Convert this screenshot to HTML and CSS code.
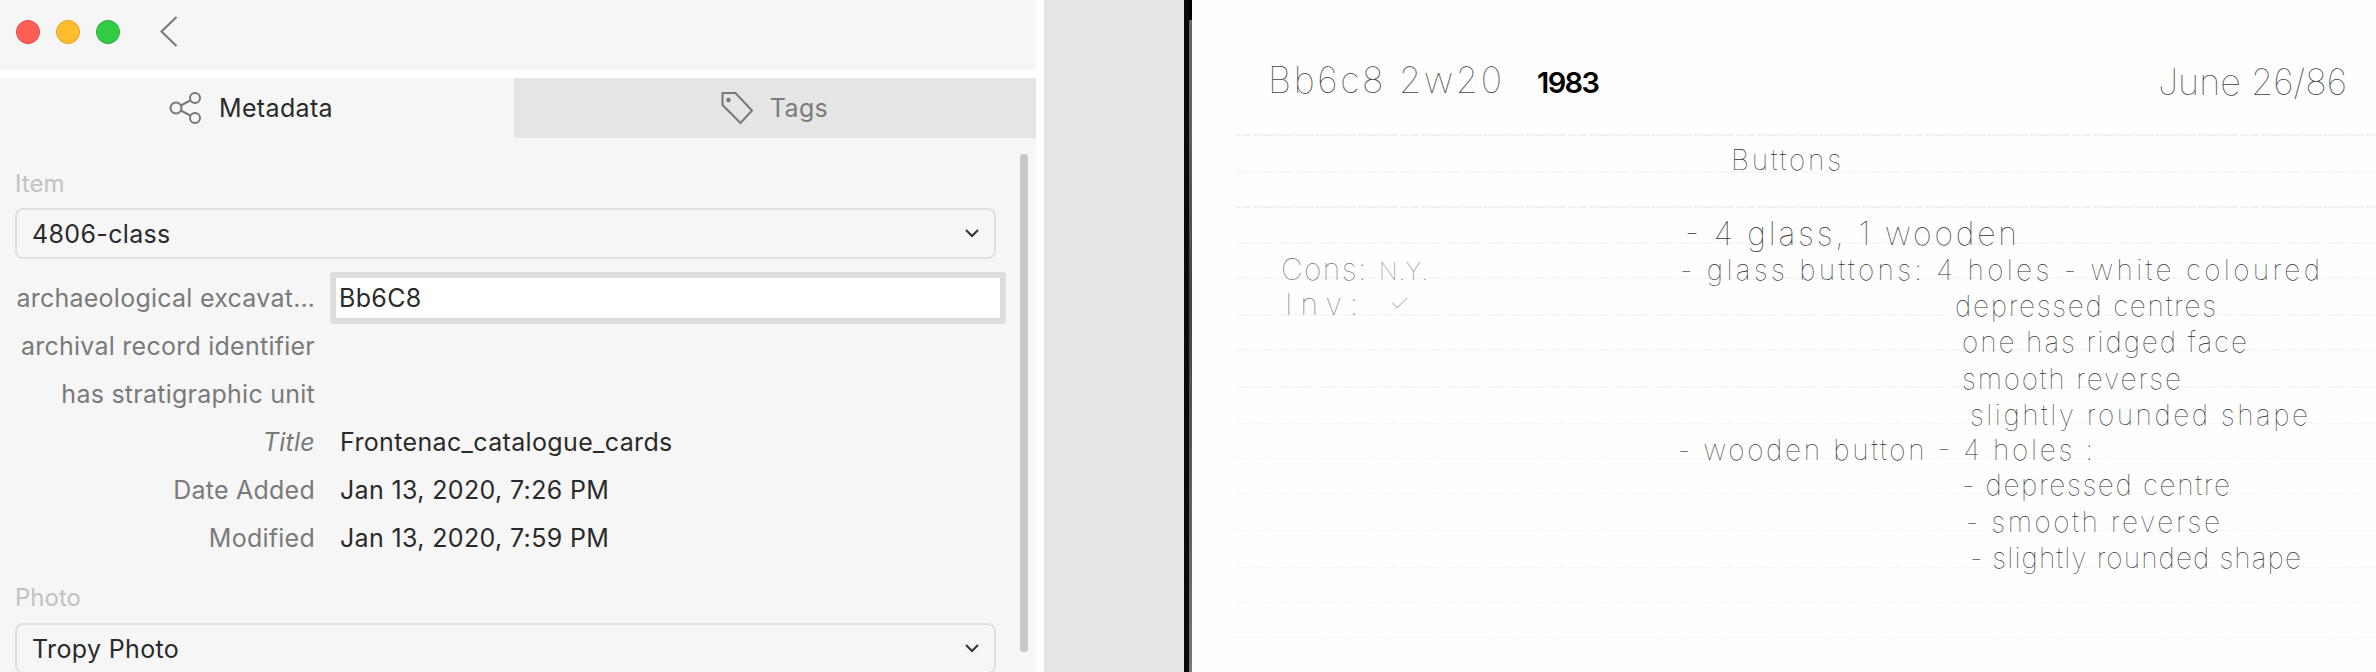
FILE: index.html
```html
<!DOCTYPE html>
<html lang="en">
<head>
<meta charset="utf-8">
<title>Tropy item</title>
<link rel="stylesheet" href="styles.css">
</head>
<body>
<aside class="sidebar">
  <header class="titlebar">
    <span class="light light-red"></span>
    <span class="light light-yellow"></span>
    <span class="light light-green"></span>
    <svg class="back" viewBox="0 0 18 32"><path d="M16.500 1 1.500 15.500 16.500 30"/></svg>
  </header>
  <nav class="tabs">
    <div class="tab tab-active">
      <svg class="tab-icon" viewBox="0 0 34 34"><circle cx="26" cy="7" r="5"/><circle cx="7" cy="17" r="5.500"/><circle cx="26" cy="27" r="5"/><path d="M11.800 14.500 21.500 9.300M11.800 19.500 21.500 24.700"/></svg>
      <span>Metadata</span>
    </div>
    <div class="tab tab-inactive">
      <svg class="tab-icon" viewBox="0 0 34 34"><path d="M2.500 2H15.500L32 19.500 20.500 32 2.500 14Z"/><circle class="tag-dot" cx="8.500" cy="9" r="2.200"/></svg>
      <span>Tags</span>
    </div>
  </nav>
  <div class="panel">
    <div class="fields">
      <section class="group">
        <h2 class="group-title">Item</h2>
        <div class="select"><span>4806-class</span><svg class="chevron" viewBox="0 0 14 9"><path d="M1 1 7 7 13 1"/></svg></div>
        <div class="rows">
          <div class="row"><span class="label">archaeological excavat…</span><div class="input">Bb6C8</div></div>
          <div class="row"><span class="label">archival record identifier</span></div>
          <div class="row"><span class="label">has stratigraphic unit</span></div>
          <div class="row"><span class="label label-title">Title</span><span class="value">Frontenac_catalogue_cards</span></div>
          <div class="row"><span class="label">Date Added</span><span class="value">Jan 13, 2020, 7:26 PM</span></div>
          <div class="row"><span class="label">Modified</span><span class="value">Jan 13, 2020, 7:59 PM</span></div>
        </div>
      </section>
      <section class="group group-photo">
        <h2 class="group-title">Photo</h2>
        <div class="select"><span>Tropy Photo</span><svg class="chevron" viewBox="0 0 14 9"><path d="M1 1 7 7 13 1"/></svg></div>
      </section>
    </div>
    <div class="scrollbar"></div>
  </div>
</aside>
<div class="gutter"></div>
<div class="edge"></div>
<main class="scan">
  <svg class="page" viewBox="1192 0 1184 672">
    <path class="margin-line" d="M1238 8V200"/>
    <g class="rules">
      <path class="rule rule-strong" d="M1236 135H2376M1236 207H2376"/>
      <path class="rule" d="M1236 172H2376M1236 243H2376M1236 278H2376M1236 315H2376M1236 350H2376M1236 387H2376"/>
      <path class="rule rule-faint" d="M1236 423H2376M1236 458H2376M1236 493H2376M1236 530H2376M1236 567H2376M1236 603H2376M1230 638H2376"/>
    </g>
    <text class="hand hand-large" x="1268" y="93" textLength="234">Bb6c8 2w20</text>
    <text class="ink" x="1537" y="93" textLength="63">1983</text>
    <text class="hand hand-large" x="2158" y="95" textLength="189">June 26/86</text>
    <text class="hand" x="1731" y="170" textLength="110">Buttons</text>
    <text class="hand hand-wide" x="1685" y="245" textLength="332">- 4 glass, 1 wooden</text>
    <text class="hand" x="1680" y="280" textLength="640">- glass buttons: 4 holes - white coloured</text>
    <text class="hand" x="1955" y="316" textLength="261">depressed centres</text>
    <text class="hand" x="1962" y="352" textLength="285">one has ridged face</text>
    <text class="hand" x="1962" y="389" textLength="219">smooth reverse</text>
    <text class="hand" x="1970" y="425" textLength="338">slightly rounded shape</text>
    <text class="hand" x="1678" y="460" textLength="415">- wooden button - 4 holes :</text>
    <text class="hand" x="1962" y="495" textLength="268">- depressed centre</text>
    <text class="hand" x="1966" y="532" textLength="254">- smooth reverse</text>
    <text class="hand" x="1970" y="568" textLength="331">- slightly rounded shape</text>
    <text class="hand hand-pale" x="1281" y="280" textLength="85">Cons:</text>
    <text class="hand hand-pale hand-small" x="1379" y="280" textLength="49">N.Y.</text>
    <text class="hand hand-pale" x="1285" y="315" textLength="73">Inv:</text>
    <text class="hand hand-pale hand-small" x="1389" y="312" textLength="23">✓</text>
  </svg>
</main>
</body>
</html>
```
FILE: styles.css
```css
* {
  box-sizing: border-box;
}

html,
body {
  height: 100%;
}

body {
  margin: 0;
  display: flex;
  height: 672px;
  overflow: hidden;
  background: #fff;
  font-family: Inter, "Liberation Sans", sans-serif;
  font-size: 25px;
  letter-spacing: 0.35px;
  color: #2a2a2a;
}

.sidebar {
  width: 1036px;
  flex: none;
  display: flex;
  flex-direction: column;
  background: #f6f6f6;
  overflow: hidden;
}

.titlebar {
  height: 78px;
  flex: none;
  display: flex;
  align-items: flex-start;
  gap: 16px;
  padding: 20px 0 0 16px;
  border-bottom: 8px solid #fff;
}

.light {
  width: 24px;
  height: 24px;
  border-radius: 50%;
  border: 1px solid;
}

.light-red {
  background: #ff5f57;
  border-color: #e2463f;
}

.light-yellow {
  background: #ffbd2e;
  border-color: #dfa123;
}

.light-green {
  background: #32cd44;
  border-color: #1fb032;
}

.back {
  width: 18px;
  height: 32px;
  margin: -4px 0 0 24px;
  fill: none;
  stroke: #777;
  stroke-width: 2;
}

.tabs {
  height: 60px;
  flex: none;
  display: flex;
}

.tab {
  display: flex;
  align-items: center;
  justify-content: center;
  gap: 16px;
}

.tab-active {
  width: 514px;
  padding-right: 12px;
}

.tab-inactive {
  flex: 1;
  padding-right: 2px;
  background: #e5e5e5;
  color: #7c7c7c;
}

.tab-icon {
  width: 34px;
  height: 34px;
  fill: none;
  stroke: #777;
  stroke-width: 2;
}

.tag-dot {
  fill: #777;
  stroke: none;
}

.panel {
  flex: 1;
  display: flex;
  min-height: 0;
}

.fields {
  flex: 1;
  min-width: 0;
  padding: 32px 0 0 15px;
}

.group-title {
  margin: 0;
  height: 28px;
  font-size: 24px;
  letter-spacing: 0;
  line-height: 28px;
  font-weight: 400;
  color: #c2c2c2;
}

.group-photo {
  margin-top: 22px;
}

.select {
  width: 981px;
  height: 51px;
  margin-top: 10px;
  display: flex;
  align-items: center;
  justify-content: space-between;
  padding: 0 15px 0 15px;
  border: 2px solid #e0e0e0;
  border-radius: 8px;
}

.group-photo .select {
  margin-top: 11px;
}

.chevron {
  width: 14px;
  height: 9px;
  flex: none;
  fill: none;
  stroke: #333;
  stroke-width: 2;
}

.rows {
  margin-top: 15px;
  width: 991px;
}

.row {
  height: 48px;
  display: flex;
  align-items: center;
  gap: 25px;
}

.label {
  width: 300px;
  flex: none;
  text-align: right;
  letter-spacing: 0.25px;
  color: #7a7a7a;
  white-space: nowrap;
}

.label-title {
  font-style: italic;
}

.input {
  flex: 1;
  height: 52px;
  margin-left: -10px;
  padding-left: 3px;
  display: flex;
  align-items: center;
  background: #fff;
  border: 6px solid #ddd;
  border-radius: 4px;
}

.value {
  white-space: nowrap;
}

.scrollbar {
  width: 8px;
  height: 498px;
  margin: 16px 8px 0 0;
  flex: none;
  background: #c9c9c9;
  border-radius: 4px;
}

.gutter {
  width: 140px;
  margin-left: 8px;
  flex: none;
  background: #e5e5e5;
}

.edge {
  width: 8px;
  flex: none;
  background:
    linear-gradient(90deg, #0a0a0a 0 5px, transparent 5px) 0 0 / 100% 100% no-repeat,
    linear-gradient(180deg, #000 0 20px, #666 20px 100px, #444 300px, #777 100%);
}

.scan {
  flex: 1;
  min-width: 0;
  background: #fefefe;
}

.page {
  display: block;
  width: 100%;
  height: 100%;
}

.margin-line {
  fill: none;
  stroke: #f6f6f6;
  stroke-width: 1;
}

.rule {
  fill: none;
  stroke: #efefef;
  stroke-width: 1;
  stroke-dasharray: 5 1 9 2 3 1;
}

.rule-strong {
  stroke: #e2e2e2;
}

.rule-faint {
  stroke: #f4f4f4;
}

.hand {
  font-family: Inter, "Liberation Sans", sans-serif;
  font-size: 28px;
  font-weight: 100;
  letter-spacing: 0;
  fill: #333;
}

.hand-large {
  font-size: 36px;
  fill: #444;
}

.hand-wide {
  font-size: 32px;
}

.hand-pale {
  font-size: 30px;
  fill: #777;
}

.hand-small {
  font-size: 24px;
}

.ink {
  font-family: Inter, "Liberation Sans", sans-serif;
  font-size: 29px;
  font-weight: 600;
  letter-spacing: 0;
  fill: #000;
}
```
